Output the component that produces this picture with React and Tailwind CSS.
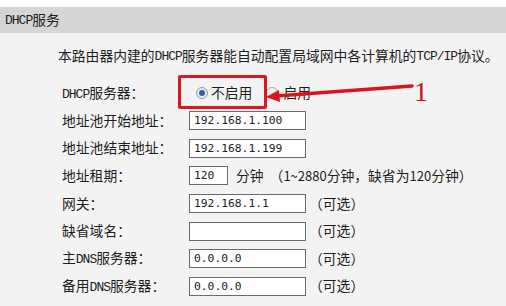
import React from "react";

const M = ({ children }) => (
  <span className="font-['Liberation_Mono'] text-[13px] tracking-[-1px]">{children}</span>
);

const Input = ({ value, w = "w-[117px]" }) => (
  <div
    className={`${w} h-[19px] border border-[#6a6a6a] bg-white flex items-center pl-[4px] font-['DejaVu_Sans_Mono'] text-[11.3px] text-[#222] leading-none`}
  >
    {value}
  </div>
);

const Optional = () => <span className="ml-[3px]">（可选）</span>;

const Row = ({ label, children, h = "h-[27.6px]" }) => (
  <div className={`flex items-center ${h}`}>
    <div className="w-[127px] shrink-0">{label}</div>
    {children}
  </div>
);

export default function App() {
  return (
    <div className="relative w-[506px] h-[306px] overflow-hidden bg-[#f3f3f3] font-['Noto_Sans_CJK_SC',sans-serif] text-[13.8px] leading-none text-[#1e1e1e]">
      <div className="h-[7px] bg-white" />
      <div className="h-[26px] bg-[#d5d5d5] flex items-center pl-[5px]">
        <M>DHCP</M>服务
      </div>
      <div className="h-[46px] flex items-center pl-[58px]">
        本路由器内建的<M>DHCP</M>服务器能自动配置局域网中各计算机的<M>TCP/IP</M>协议。
      </div>
      <div className="pl-[62px]">
        <Row
          h="h-[28px]"
          label={
            <>
              <M>DHCP</M>服务器：
            </>
          }
        >
          <div className="flex items-center">
            <span className="ml-[7px] w-[12px] h-[12px] rounded-full border border-[#8d99a6] bg-[#e8edf2] flex items-center justify-center">
              <span className="w-[6px] h-[6px] rounded-full bg-[#2b63a8]" />
            </span>
            <span className="ml-[3px]">不启用</span>
            <span className="ml-[14px] w-[12px] h-[12px] rounded-full border border-[#a8a8a8] bg-[#f0f0f0]" />
            <span className="ml-[5px]">启用</span>
          </div>
        </Row>
        <Row label="地址池开始地址：">
          <Input value="192.168.1.100" />
        </Row>
        <Row label="地址池结束地址：">
          <Input value="192.168.1.199" />
        </Row>
        <Row label="地址租期：">
          <Input value="120" w="w-[39px]" />
          <span className="ml-[8px]">分钟</span>
          <span className="ml-[6px]">
            （<span className="text-[13px]">1~2880</span>分钟，缺省为<span className="text-[13px]">120</span>分钟）
          </span>
        </Row>
        <Row label="网关：">
          <Input value="192.168.1.1" />
          <Optional />
        </Row>
        <Row label="缺省域名：">
          <Input value="" />
          <Optional />
        </Row>
        <Row label={<>主<M>DNS</M>服务器：</>}>
          <Input value="0.0.0.0" />
          <Optional />
        </Row>
        <Row label={<>备用<M>DNS</M>服务器：</>}>
          <Input value="0.0.0.0" />
          <Optional />
        </Row>
      </div>

      {/* annotation overlay */}
      <div className="absolute left-[178px] top-[75px] w-[89px] h-[34px] border-[3px] border-[#e0161e] rounded-[2px]" />
      <svg
        className="absolute left-0 top-0 pointer-events-none"
        width="506"
        height="306"
        viewBox="0 0 506 306"
      >
        <line x1="412" y1="86" x2="276" y2="96" stroke="#d9141c" strokeWidth="3.5" strokeLinecap="round" />
        <polygon points="266,97 279,90 280,102" fill="#d9141c" />
      </svg>
      <span className="absolute left-[414px] top-[78px] font-['Liberation_Serif',serif] text-[28px] leading-none text-[#c8141c]">
        1
      </span>
    </div>
  );
}
